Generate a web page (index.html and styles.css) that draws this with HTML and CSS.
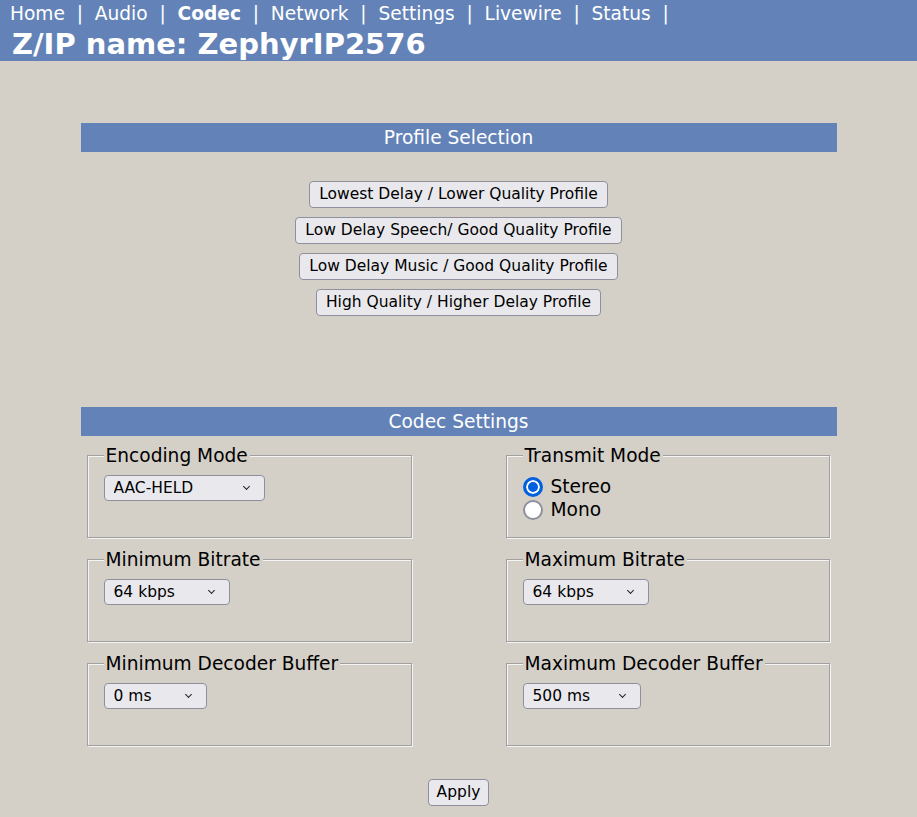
FILE: index.html
```html
<!DOCTYPE html>
<html>
<head>
<meta charset="utf-8">
<title>Z/IP Codec</title>
<link rel="stylesheet" href="styles.css">
</head>
<body>
<header class="top">
  <nav class="nav">Home&nbsp; |&nbsp; Audio&nbsp; |&nbsp; <b>Codec</b>&nbsp; |&nbsp; Network&nbsp; |&nbsp; Settings&nbsp; |&nbsp; Livewire&nbsp; |&nbsp; Status&nbsp; |</nav>
  <h1 class="title">Z/IP name: ZephyrIP2576</h1>
</header>

<main class="page">
  <section class="panel profile">
    <h2 class="bar">Profile Selection</h2>
    <div class="profiles">
      <button class="btn">Lowest Delay / Lower Quality Profile</button>
      <button class="btn">Low Delay Speech/ Good Quality Profile</button>
      <button class="btn">Low Delay Music / Good Quality Profile</button>
      <button class="btn">High Quality / Higher Delay Profile</button>
    </div>
  </section>

  <section class="panel codec">
    <h2 class="bar">Codec Settings</h2>
    <div class="grid">
      <fieldset class="box">
        <legend>Encoding Mode</legend>
        <span class="sel sel-mode"><select><option>AAC-HELD</option></select></span>
      </fieldset>
      <fieldset class="box">
        <legend>Transmit Mode</legend>
        <label class="radio"><input type="radio" name="tm" checked> Stereo</label>
        <label class="radio"><input type="radio" name="tm"> Mono</label>
      </fieldset>
      <fieldset class="box">
        <legend>Minimum Bitrate</legend>
        <span class="sel sel-rate"><select><option>64 kbps</option></select></span>
      </fieldset>
      <fieldset class="box">
        <legend>Maximum Bitrate</legend>
        <span class="sel sel-rate"><select><option>64 kbps</option></select></span>
      </fieldset>
      <fieldset class="box">
        <legend>Minimum Decoder Buffer</legend>
        <span class="sel sel-min"><select><option>0 ms</option></select></span>
      </fieldset>
      <fieldset class="box">
        <legend>Maximum Decoder Buffer</legend>
        <span class="sel sel-max"><select><option>500 ms</option></select></span>
      </fieldset>
    </div>
    <div class="apply"><button class="btn">Apply</button></div>
  </section>
</main>
</body>
</html>
```

FILE: styles.css
```css
html, body {
  margin: 0;
  padding: 0;
}
body {
  background: #d4d0c8;
  font-family: "DejaVu Sans", Verdana, sans-serif;
  color: #000;
}
.top {
  background: #6383b8;
  color: #fff;
  padding: 1px 10px 0 10px;
  height: 60px;
}
.nav {
  font-size: 18.6px;
  line-height: 26px;
  white-space: nowrap;
}
.title {
  margin: 0;
  padding-left: 2px;
  font-size: 29px;
  font-weight: bold;
  line-height: 34px;
}
.page {
  width: 756px;
  margin: 62px auto 0 auto;
}
.bar {
  margin: 0;
  background: #6383b8;
  color: #fff;
  font-size: 18.6px;
  font-weight: normal;
  text-align: center;
  height: 29px;
  line-height: 29px;
}
.profiles {
  display: flex;
  flex-direction: column;
  align-items: center;
  gap: 9px;
  padding-top: 29px;
  height: 226px;
}
.btn {
  font-family: "DejaVu Sans", Verdana, sans-serif;
  font-size: 15.5px;
  color: #000;
  background: #e9e9ed;
  border: 1px solid #8f8f9d;
  border-radius: 4px;
  height: 27px;
  padding: 0 9px;
  line-height: 25px;
}
.grid {
  display: grid;
  grid-template-columns: 325px 324px;
  justify-content: space-between;
  row-gap: 11px;
  padding: 9px 7px 0 6px;
}
.box {
  margin: 0;
  border: 1px solid #a0a0a0;
  box-shadow: inset 1px 1px 0 #f4f4f4, 1px 1px 0 #f4f4f4;
  padding: 9px 15px 0 16px;
  height: 82px;
  box-sizing: content-box;
}
.box legend {
  font-size: 18.6px;
  line-height: 21px;
  padding: 0 2px;
  background: #d4d0c8;
}
.sel {
  position: relative;
  display: inline-block;
}
.sel select {
  appearance: none;
  -webkit-appearance: none;
  font-family: "DejaVu Sans", Verdana, sans-serif;
  font-size: 15.5px;
  color: #000;
  background: #e9e9ed;
  border: 1px solid #8f8f9d;
  border-radius: 4px;
  height: 26px;
  padding: 0 0 0 9px;
  margin: 0;
  display: block;
}
.sel::after {
  content: "";
  position: absolute;
  right: 16px;
  top: 9px;
  width: 4px;
  height: 4px;
  border-right: 1.5px solid #222;
  border-bottom: 1.5px solid #222;
  transform: rotate(45deg);
  pointer-events: none;
}
.sel-mode select { width: 161px; }
.sel-rate select { width: 126px; }
.sel-min select { width: 103px; }
.sel-max select { width: 118px; }
.radio {
  display: flex;
  align-items: center;
  gap: 8px;
  font-size: 18.6px;
  height: 23px;
}
.radio input {
  appearance: none;
  -webkit-appearance: none;
  margin: 0;
  width: 20px;
  height: 20px;
  box-sizing: border-box;
  border-radius: 50%;
  border: 2px solid #8f8f9d;
  background: #fff;
}
.radio input:checked {
  border: 3px solid #0060df;
  background: #0060df;
  box-shadow: inset 0 0 0 2px #fff;
}
.apply {
  display: flex;
  justify-content: center;
  padding-top: 33px;
}
.apply .btn {
  padding: 0 8px;
}
```
